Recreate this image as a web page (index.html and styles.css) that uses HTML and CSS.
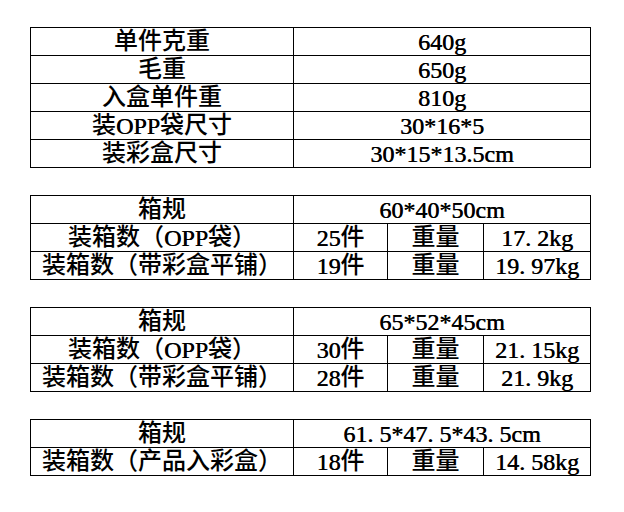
FILE: index.html
```html
<!DOCTYPE html>
<html lang="zh-CN">
<head>
<meta charset="utf-8">
<title>包装规格</title>
<link rel="stylesheet" href="styles.css">
</head>
<body>
<div class="sheet">
  <table class="spec spec-basic">
    <colgroup><col class="c-label"><col class="c-value"></colgroup>
    <tr><td>单件克重</td><td><span class="num">640g</span></td></tr>
    <tr><td>毛重</td><td><span class="num">650g</span></td></tr>
    <tr><td>入盒单件重</td><td><span class="num">810g</span></td></tr>
    <tr><td>装<span class="lat">OPP</span>袋尺寸</td><td><span class="num">30*16*5</span></td></tr>
    <tr><td>装彩盒尺寸</td><td><span class="num">30*15*13.5cm</span></td></tr>
  </table>

  <table class="spec">
    <colgroup><col class="c-label"><col class="c-qty"><col class="c-key"><col class="c-wt"></colgroup>
    <tr><td>箱规</td><td colspan="3"><span class="num">60*40*50cm</span></td></tr>
    <tr><td>装箱数（<span class="lat">OPP</span>袋）</td><td><span class="num">25</span>件</td><td>重量</td><td><span class="num">17.&nbsp;2kg</span></td></tr>
    <tr><td>装箱数（带彩盒平铺）</td><td><span class="num">19</span>件</td><td>重量</td><td><span class="num">19.&nbsp;97kg</span></td></tr>
  </table>

  <table class="spec">
    <colgroup><col class="c-label"><col class="c-qty"><col class="c-key"><col class="c-wt"></colgroup>
    <tr><td>箱规</td><td colspan="3"><span class="num">65*52*45cm</span></td></tr>
    <tr><td>装箱数（<span class="lat">OPP</span>袋）</td><td><span class="num">30</span>件</td><td>重量</td><td><span class="num">21.&nbsp;15kg</span></td></tr>
    <tr><td>装箱数（带彩盒平铺）</td><td><span class="num">28</span>件</td><td>重量</td><td><span class="num">21.&nbsp;9kg</span></td></tr>
  </table>

  <table class="spec">
    <colgroup><col class="c-label"><col class="c-qty"><col class="c-key"><col class="c-wt"></colgroup>
    <tr><td>箱规</td><td colspan="3"><span class="num">61.&nbsp;5*47.&nbsp;5*43.&nbsp;5cm</span></td></tr>
    <tr><td>装箱数（产品入彩盒）</td><td><span class="num">18</span>件</td><td>重量</td><td><span class="num">14.&nbsp;58kg</span></td></tr>
  </table>
</div>
</body>
</html>
```

FILE: styles.css
```css
html, body {
  margin: 0;
  padding: 0;
  background: #ffffff;
}

.sheet {
  display: flex;
  flex-direction: column;
  gap: 27px;
  padding: 27px 0 0 30px;
}

.spec {
  border-collapse: collapse;
  table-layout: fixed;
  width: 561px;
  font-family: "Liberation Serif", "Noto Sans CJK SC", serif;
  font-size: 24px;
  font-weight: 500;
  color: #000000;
}

.spec td {
  border: 1px solid #000000;
  height: 27px;
  padding: 0;
  line-height: 27px;
  text-align: center;
  vertical-align: bottom;
  white-space: nowrap;
  overflow: hidden;
}

.num,
.lat {
  font-weight: 400;
  position: relative;
  top: 1px;
  text-shadow: 0.4px 0 0 #000000;
}

.c-label { width: 263px; }
.c-value { width: 297px; }
.c-qty { width: 94px; }
.c-key { width: 96px; }
.c-wt { width: 107px; }
```
